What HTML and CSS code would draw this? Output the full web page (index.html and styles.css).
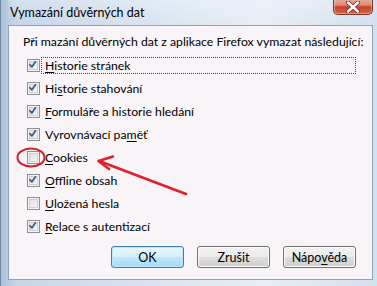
FILE: index.html
```html
<!DOCTYPE html>
<html lang="cs">
<head>
<meta charset="utf-8">
<title>Vymazání důvěrných dat</title>
<link rel="stylesheet" href="styles.css">
</head>
<body>
<div class="window">
  <div class="titlebar">
    <span class="title">Vymazání důvěrných dat</span>
    <div class="close">
      <svg width="20" height="12" viewBox="0 0 20 12"><path d="M5 1.5 L15 10.5 M15 1.5 L5 10.5" stroke="#7a2e22" stroke-width="4.2" stroke-linecap="round" fill="none"/><path d="M5 1.5 L15 10.5 M15 1.5 L5 10.5" stroke="#ffffff" stroke-width="2.4" stroke-linecap="round" fill="none"/></svg>
    </div>
  </div>
  <div class="client">
    <p class="intro">Při mazání důvěrných dat z aplikace Firefox vymazat následující:</p>
    <ul class="options">
      <li class="opt"><span class="cb checked"><svg viewBox="0 0 13 13"><path d="M3.2 6.6 L5.6 9.2 L9.8 3.2"/></svg></span><span class="label focused"><u>H</u>istorie stránek</span></li>
      <li class="opt"><span class="cb checked"><svg viewBox="0 0 13 13"><path d="M3.2 6.6 L5.6 9.2 L9.8 3.2"/></svg></span><span class="label">Hi<u>s</u>torie stahování</span></li>
      <li class="opt"><span class="cb checked"><svg viewBox="0 0 13 13"><path d="M3.2 6.6 L5.6 9.2 L9.8 3.2"/></svg></span><span class="label"><u>F</u>ormuláře a historie hledání</span></li>
      <li class="opt"><span class="cb checked"><svg viewBox="0 0 13 13"><path d="M3.2 6.6 L5.6 9.2 L9.8 3.2"/></svg></span><span class="label">Vyrovnávací pa<u>m</u>ěť</span></li>
      <li class="opt"><span class="cb"></span><span class="label"><u>C</u>ookies</span></li>
      <li class="opt"><span class="cb checked"><svg viewBox="0 0 13 13"><path d="M3.2 6.6 L5.6 9.2 L9.8 3.2"/></svg></span><span class="label"><u>O</u>ffline obsah</span></li>
      <li class="opt"><span class="cb"></span><span class="label"><u>U</u>ložená hesla</span></li>
      <li class="opt"><span class="cb checked"><svg viewBox="0 0 13 13"><path d="M3.2 6.6 L5.6 9.2 L9.8 3.2"/></svg></span><span class="label"><u>R</u>elace s autentizací</span></li>
    </ul>
    <div class="buttons">
      <button class="btn default">OK</button>
      <button class="btn">Zrušit</button>
      <button class="btn">Nápo<u>v</u>ěda</button>
    </div>
  </div>
  <svg class="annotation" width="377" height="286" viewBox="0 0 377 286">
    <ellipse cx="30" cy="157.5" rx="13.5" ry="9" fill="none" stroke="#d41e2a" stroke-width="2"/>
    <path d="M185 194 L98 161" stroke="#e0202a" stroke-width="2.6" fill="none" stroke-linecap="round"/>
    <path d="M112 156.5 L97.5 161 L108 169" stroke="#e0202a" stroke-width="2.6" fill="none" stroke-linecap="round" stroke-linejoin="round"/>
  </svg>
</div>
</body>
</html>
```
FILE: styles.css
```css
* { box-sizing: border-box; }
html, body { margin: 0; padding: 0; }
body {
  width: 377px;
  height: 286px;
  overflow: hidden;
  font-family: Lato, "Noto Sans", "DejaVu Sans", sans-serif;
  font-size: 12.25px;
  color: #000;
}
.window {
  position: relative;
  width: 377px;
  height: 286px;
  padding: 0 4px 6px 7px;
  display: flex;
  flex-direction: column;
  background: linear-gradient(90deg, #a9bfd8 0%, #c6d6e8 4%, #d8e4f1 40%, #e6edf5 70%, #d3e0ee 100%);
  border-left: 1px solid #6f86a0;
}
.titlebar {
  height: 25px;
  flex: none;
  display: flex;
  align-items: flex-start;
  justify-content: space-between;
  background: linear-gradient(180deg, rgba(255,255,255,0.25), rgba(255,255,255,0));
}
.title {
  padding: 5px 0 0 2px;
  font-size: 12.5px;
  line-height: 16px;
  color: #000;
}
.close {
  width: 40px;
  height: 17px;
  margin-top: -2px;
  margin-right: 0;
  display: flex;
  align-items: center;
  justify-content: center;
  padding-top: 2px;
  border: 1px solid #7d3326;
  border-top: none;
  border-radius: 0 0 5px 5px;
  background: linear-gradient(180deg, #eab2a2 0%, #dd8a73 45%, #c8432a 55%, #d2634a 100%);
  box-shadow: inset 0 0 0 1px rgba(255,220,210,0.45);
}
.close svg { display: block; }
.client {
  flex: 1;
  display: flex;
  flex-direction: column;
  background: #f8f4f7;
  border: 1px solid #8da2bb;
  padding: 8px 16px 11px 0;
}
.intro {
  margin: 0 0 5px 14px;
  line-height: 15px;
  white-space: nowrap;
}
.options {
  list-style: none;
  margin: 0;
  padding: 0 0 0 18px;
}
.opt {
  height: 23px;
  display: flex;
  align-items: center;
}
.cb {
  width: 13px;
  height: 13px;
  flex: none;
  border: 1px solid #8f8f8f;
  background: linear-gradient(135deg, #dcdcdc 0%, #eeeeee 60%, #fbfbfb 100%);
  box-shadow: inset 0 0 0 1px #f4f4f4, inset 0 0 0 2px #cfcfcf;
  margin-right: 1px;
}
.cb svg {
  display: block;
  width: 11px;
  height: 11px;
}
.cb svg path {
  fill: none;
  stroke: #3d5a97;
  stroke-width: 2.1;
  stroke-linecap: round;
  stroke-linejoin: round;
  transform: translate(-1px, -1px);
}
.label {
  line-height: 15px;
  padding: 0 3px;
  border: 1px dotted transparent;
  white-space: nowrap;
}
.label.focused {
  flex: 1;
  border-color: #444;
}
u { text-decoration-thickness: 1px; text-underline-offset: 2px; }
.buttons {
  margin-top: 8px;
  display: flex;
  justify-content: flex-end;
  gap: 13px;
}
.btn {
  width: 73px;
  height: 22px;
  font-family: inherit;
  font-size: 12.5px;
  color: #000;
  padding: 0;
  border: 1px solid #707070;
  border-radius: 3px;
  background: linear-gradient(180deg, #f2f2f2 0%, #ebebeb 48%, #dddddd 52%, #cfcfcf 100%);
  box-shadow: inset 0 0 0 1px #fcfcfc;
}
.btn.default {
  border-color: #3c7fb1;
  background: linear-gradient(180deg, #eaf6fd 0%, #d9f0fc 48%, #bee6fd 52%, #a7d9f5 100%);
  box-shadow: inset 0 0 0 1px #b8e6fb;
}
.annotation {
  position: absolute;
  left: 0;
  top: 0;
  pointer-events: none;
}
```
